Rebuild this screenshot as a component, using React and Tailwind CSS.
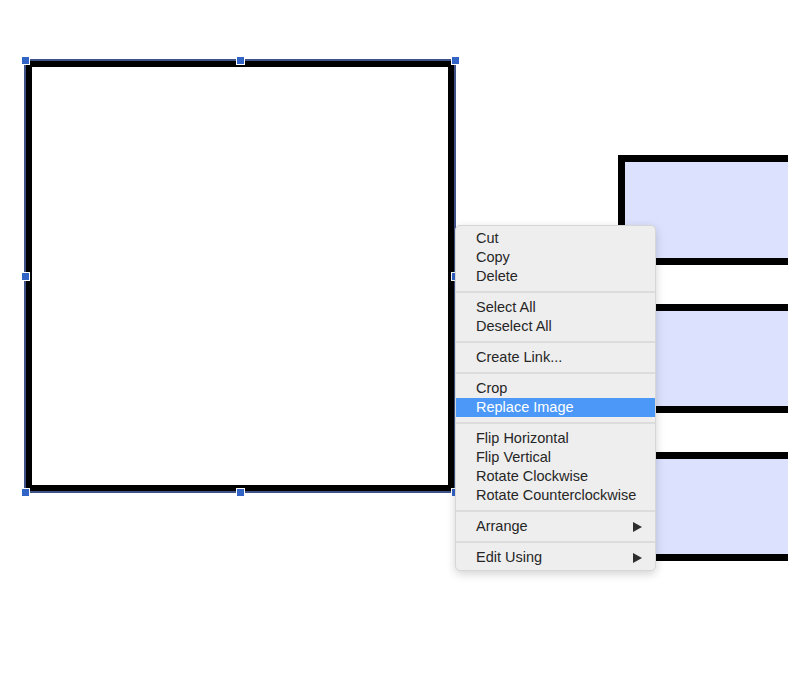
import React from 'react'

const groups = [
  ['Cut', 'Copy', 'Delete'],
  ['Select All', 'Deselect All'],
  ['Create Link...'],
  ['Crop', 'Replace Image'],
  ['Flip Horizontal', 'Flip Vertical', 'Rotate Clockwise', 'Rotate Counterclockwise'],
  ['Arrange'],
  ['Edit Using'],
]

const submenu = ['Arrange', 'Edit Using']

const handles = [
  'left-[22px] top-[57px]',
  'left-[237px] top-[57px]',
  'left-[452px] top-[57px]',
  'left-[22px] top-[273px]',
  'left-[452px] top-[273px]',
  'left-[22px] top-[489px]',
  'left-[237px] top-[489px]',
  'left-[452px] top-[489px]',
]

function MenuItem({ label }) {
  const active = label === 'Replace Image'
  return (
    <div
      className={`flex h-[19px] items-center justify-between pl-[20px] pr-[13px] ${
        active ? 'bg-[#4b98f8] text-white' : 'text-[#262626]'
      }`}
    >
      <span>{label}</span>
      {submenu.includes(label) && (
        <svg width="9" height="10" viewBox="0 0 9 10">
          <path d="M0 0 L9 5 L0 10 Z" fill="#2e2e2e" />
        </svg>
      )}
    </div>
  )
}

export default function App() {
  return (
    <div className="relative h-[693px] w-[788px] overflow-hidden bg-white font-['Liberation_Sans',Arial,sans-serif]">
      {/* blue boxes on the right */}
      <div className="absolute left-[618px] top-[155px] flex w-[200px] flex-col gap-[39px]">
        <div className="h-[110px] border-[7px] border-black bg-[#dce1fd]" />
        <div className="h-[109px] border-[7px] border-black bg-[#dce1fd]" />
        <div className="h-[109px] border-[7px] border-black bg-[#dce1fd]" />
      </div>

      {/* selected square */}
      <div className="absolute left-[24px] top-[59px] h-[434px] w-[432px] border-2 border-[#3f5387]">
        <div className="h-full w-full border-[6px] border-black bg-white" />
      </div>
      {handles.map(pos => (
        <div key={pos} className={`absolute ${pos} h-[7px] w-[7px] bg-[#3263c6] ring-1 ring-white`} />
      ))}

      {/* context menu */}
      <div className="absolute left-[455px] top-[225px] w-[201px] rounded-[5px] border border-[#d6d6d6] bg-[#eeeeee] py-[3px] text-[14.5px] leading-[19px] shadow-[0_3px_10px_rgba(0,0,0,0.18)]">
        {groups.map((items, i) => (
          <div key={i}>
            {i > 0 && (
              <div className="flex h-[12px] items-center">
                <div className="h-[2px] w-full bg-[#dcdcdc]" />
              </div>
            )}
            {items.map(label => (
              <MenuItem key={label} label={label} />
            ))}
          </div>
        ))}
      </div>
    </div>
  )
}
